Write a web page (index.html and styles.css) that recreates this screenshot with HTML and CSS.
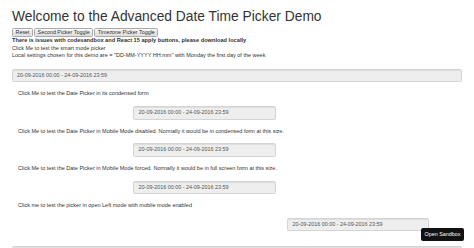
FILE: index.html
```html
<!DOCTYPE html>
<html lang="en">
<head>
    <meta charset="UTF-8">
    <meta name="viewport" content="width=device-width, initial-scale=1.0">
    <title>Advanced Date Time Picker Demo</title>
    <link rel="stylesheet" href="styles.css">
</head>
<body>
    <div class="container">
        <h1 class="page-title">Welcome to the Advanced Date Time Picker Demo</h1>
        <div class="toggle-bar">
            <button class="toggle-btn">Reset</button>
            <button class="toggle-btn">Second Picker Toggle</button>
            <button class="toggle-btn">Timezone Picker Toggle</button>
        </div>
        <b class="notice">There is issues with codesandbox and React 15 apply buttons, please download locally</b>
        <div class="note">Click Me to test the smart mode picker</div>
        <div class="note">Local settings chosen for this demo are = "DD-MM-YYYY HH:mm" with Monday the first day of the week</div>
        <div class="range-input range-full">20-09-2016 00:00 - 24-09-2016 23:59</div>

        <div class="picker-row">
            <div class="picker-label">Click Me to test the Date Picker in its condensed form</div>
            <div class="range-input range-mid">20-09-2016 00:00 - 24-09-2016 23:59</div>
        </div>
        <div class="picker-row">
            <div class="picker-label">Click Me to test the Date Picker in Mobile Mode disabled. Normally it would be in condensed form at this size.</div>
            <div class="range-input range-mid">20-09-2016 00:00 - 24-09-2016 23:59</div>
        </div>
        <div class="picker-row">
            <div class="picker-label">Click Me to test the Date Picker in Mobile Mode forced. Normally it would be in full screen form at this size.</div>
            <div class="range-input range-mid">20-09-2016 00:00 - 24-09-2016 23:59</div>
        </div>
        <div class="picker-row">
            <div class="picker-label">Click me to test the picker in open Left mode with mobile mode enabled</div>
            <div class="range-input range-left">20-09-2016 00:00 - 24-09-2016 23:59</div>
        </div>

        <!-- next picker, only its top edge fits in the window -->
        <div class="range-input range-full range-last"></div>
    </div>
    <a href="#" class="sandbox-btn">Open Sandbox</a>
</body>
</html>
```

FILE: styles.css
```css
* {
    padding: 0;
    margin: 0;
    box-sizing: border-box;
    font-family: "Liberation Sans", Arial, sans-serif;
}
body {
    background: #fff;
    color: #333;
    font-size: 5.5px;
    line-height: 7.7px;
}
.container {
    margin: 0 12px;
}
.page-title {
    font-size: 13.8px;
    font-weight: normal;
    line-height: 1.1;
    margin: 8.5px 0 4.2px;
}
.toggle-bar {
    display: flex;
    gap: 1px;
}
.toggle-btn {
    height: 9px;
    padding: 0 2.5px;
    font-size: 5.4px;
    line-height: 7px;
    color: #333;
    background: linear-gradient(#f7f7f7, #dddddd);
    border: 1px solid #aaa;
    border-radius: 1.5px;
}
.notice {
    display: block;
    font-size: 5.65px;
}
.range-input {
    height: 13.5px;
    padding: 0 4.6px;
    font-size: 5.4px;
    line-height: 11.5px;
    color: #555;
    background: #eee;
    border: 1px solid #d4d4d4;
    border-radius: 1.5px;
    box-shadow: inset 0 1px 1px rgba(0, 0, 0, 0.075);
}
.range-full {
    margin-top: 9px;
    padding-left: 4px;
}
.picker-row {
    padding-left: 6px;
}
.picker-label {
    margin-top: 8px;
}
.range-mid {
    width: 143px;
    margin: 8px 0 0 115px;
}
.range-left {
    width: 142px;
    margin: 8px 0 0 269px;
}
.range-last {
    margin-top: 15px;
}
.sandbox-btn {
    position: fixed;
    right: 10px;
    bottom: 7px;
    height: 13.5px;
    padding: 0 3.5px;
    font-size: 5.4px;
    line-height: 13.5px;
    color: #fff;
    background: #111;
    border-radius: 2px;
    text-decoration: none;
}
```
